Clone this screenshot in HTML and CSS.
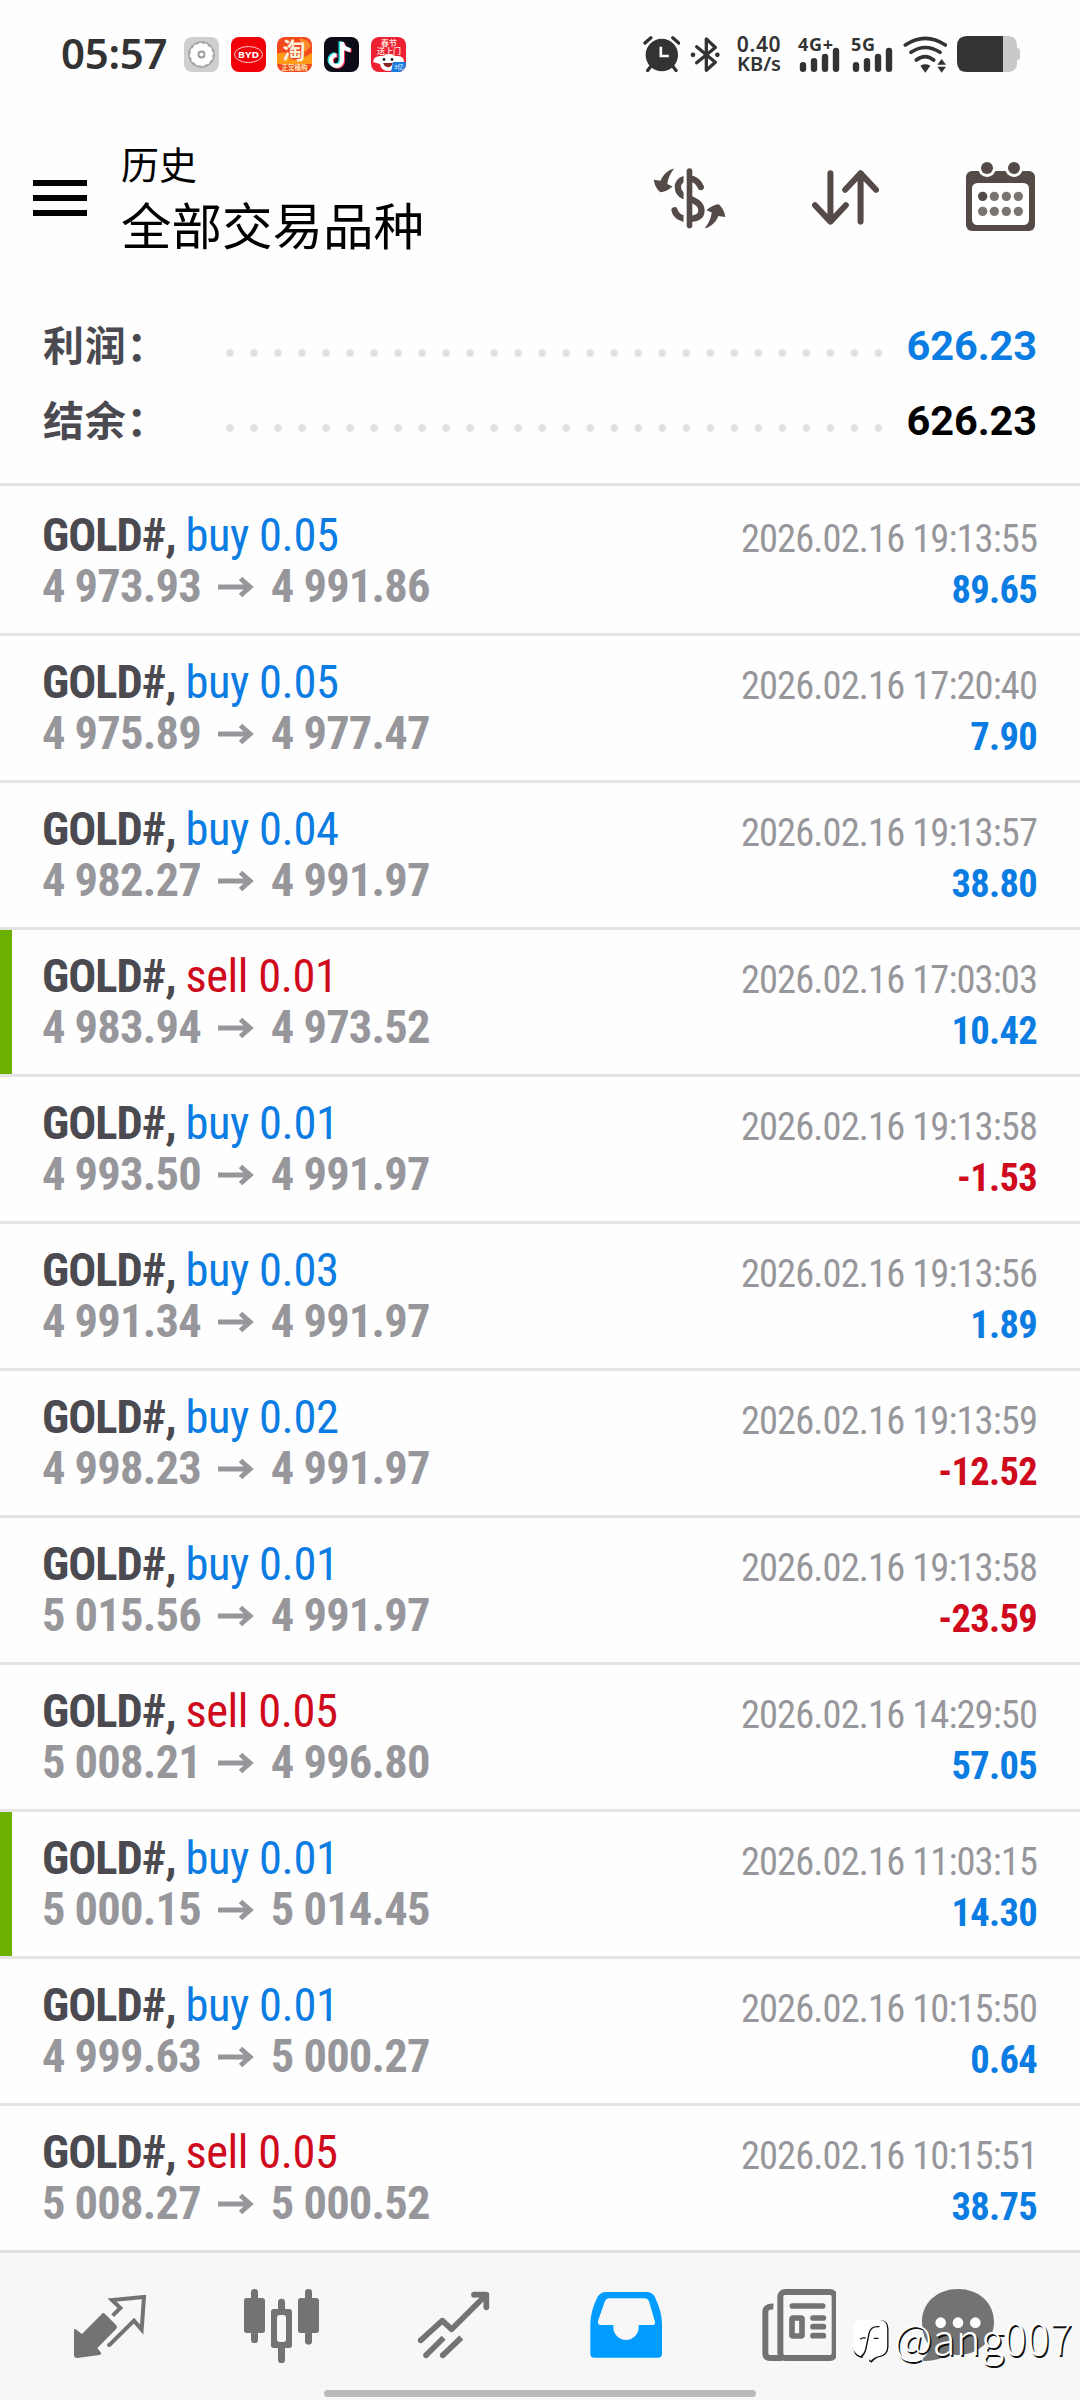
FILE: index.html
```html
<!DOCTYPE html>
<html lang="zh-CN">
<head>
<meta charset="utf-8">
<title>历史</title>
<link rel="stylesheet" href="styles.css">
</head>
<body>
<svg class="defs" width="0" height="0">
  <symbol id="arrow" viewBox="0 0 36 22"><path d="M0 11H32M22.500 2.500L32 11L22.500 19.500" fill="none" stroke="currentColor" stroke-width="5"/></symbol>
</svg>
<div class="screen">
  <div class="status">
    <span class="clock">05:57</span>
    <div class="apps">
      <svg viewBox="0 0 35 35"><rect width="35" height="35" rx="8" fill="#cfcfcf"/><circle cx="17.500" cy="17.500" r="12.500" fill="#fff" stroke="#a3a3a3" stroke-width="1.500"/><circle cx="17.500" cy="17.500" r="12" fill="none" stroke="#a3a3a3" stroke-width="2" stroke-dasharray="3 3.280"/><circle cx="17.500" cy="17.500" r="3" fill="#fff" stroke="#999" stroke-width="1.800"/></svg>
      <svg viewBox="0 0 35 35"><rect width="35" height="35" rx="8" fill="#f00008"/><ellipse cx="17.500" cy="17.500" rx="14" ry="8" fill="none" stroke="#ffc9c9" stroke-width="1"/><text x="7" y="20.800" font-size="9" font-weight="700" fill="#fff" textLength="21" lengthAdjust="spacingAndGlyphs">BYD</text></svg>
      <svg viewBox="0 0 35 35"><rect width="35" height="35" rx="8" fill="#f0491c"/><path d="M0 17Q8 13 12 20T35 16V27H0Z" fill="#ff9a18"/><path d="M22 1Q31 2 34 9L28 15Z" fill="#f98a2a"/><text x="5.500" y="21.500" font-size="23" font-weight="700" fill="#fff0dc">淘</text><text x="4.500" y="33" font-size="6.500" font-weight="700" fill="#ffe3b5">正常桶购</text></svg>
      <svg viewBox="0 0 35 35"><rect width="35" height="35" rx="8" fill="#0c0b18"/><g fill="none" stroke-width="4"><path d="M17.500 5V23.500A5.500 5.500 0 1 1 12 18M17.500 6Q19 12.500 26 13" stroke="#25e8e2" transform="translate(-1 -.8)"/><path d="M18.500 5V23.500A5.500 5.500 0 1 1 13 18M18.500 6Q20 12.500 27 13" stroke="#f43157" transform="translate(.6 .8)"/><path d="M18 5V23.500A5.500 5.500 0 1 1 12.500 18M18 6Q19.500 12.500 26.500 13" stroke="#fff"/></g></svg>
      <svg viewBox="0 0 35 35"><rect width="35" height="35" rx="8" fill="#ee2133"/><text x="10" y="9" font-size="8" font-weight="700" fill="#ffd6d0">春节</text><text x="6" y="17" font-size="8" font-weight="700" fill="#ffd6d0">送上门</text><path d="M2 25Q3 18 11 19Q18 16 25 19Q33 18 33 25L27 27Q25 34 17 34Q10 34 9 27Z" fill="#fff"/><circle cx="13" cy="22.500" r="1.400" fill="#222"/><circle cx="21" cy="22.500" r="1.400" fill="#222"/><path d="M12 26H22Q20 31 16 30Q13 29 12 26Z" fill="#8b2320"/><path d="M22 25H35V27A8 8 0 0 1 27 35H20Z" fill="#1d7be0"/><text x="23" y="32" font-size="6" fill="#fff">3亿</text></svg>
    </div>
    <div class="signals">
      <svg class="alarm" viewBox="38 48 112 108"><circle cx="95" cy="105" r="49" fill="#333"/><path d="M92 80V108H116" fill="none" stroke="#fff" stroke-width="8"/><path d="M44 69L62 53M146 69L128 53M62 139L52 152M128 139L138 152" stroke="#333" stroke-width="10" stroke-linecap="round"/></svg>
      <svg class="bt" viewBox="180 46 90 110"><path d="M200 78L256 124L229 148V54L256 80L200 126" fill="none" stroke="#333" stroke-width="10" stroke-linejoin="round" stroke-linecap="round"/><circle cx="189" cy="102" r="7" fill="#333"/><circle cx="262" cy="102" r="7" fill="#333"/></svg>
      <div class="speed"><span class="rate">0.40</span><span class="unit">KB/s</span></div>
      <div class="bars"><span>4G+</span><svg viewBox="0 0 42 36"><path d="M5 29.200V32.800M16 25.200V32.800M27 21V32.800M38 15V32.800" stroke="#333" stroke-width="6.400" stroke-linecap="round"/></svg></div>
      <div class="bars"><span>5G</span><svg viewBox="0 0 42 36"><path d="M5 29.200V32.800M16 25.200V32.800M27 21V32.800M38 15V32.800" stroke="#333" stroke-width="6.400" stroke-linecap="round"/></svg></div>
      <svg class="wifi" viewBox="820 46 132 111"><g fill="none" stroke="#333" stroke-width="11" stroke-linecap="round"><path d="M827 73Q887 33 947 73M844 95Q887 66 931 95M860 118Q887 98 912 118"/></g><path d="M872 135Q887 127 902 135L887 156ZM936 115L949 132H923ZM923 138H949L936 156Z" fill="#333"/></svg>
      <svg class="battery" viewBox="0 0 63 36"><path d="M45 0H52Q60 1 60 9V12Q63 12 63 15V21Q63 24 60 24V27Q60 35 52 36H45Z" fill="#c9c9c9"/><path d="M10 0H46V36H10Q0 36 0 26V10Q0 0 10 0Z" fill="#333"/></svg>
    </div>
  </div>

  <header class="header">
    <div class="menu"><i></i><i></i><i></i></div>
    <div class="titles"><div class="small">历史</div><div class="big">全部交易品种</div></div>
    <div class="tools">
      <svg class="currency" viewBox="40 53 220 183"><path d="M184 110C174 87 160 84 148 84C124 84 115 97 115 110C115 132 134 139 150 145C174 153 186 164 186 181C186 200 170 206 150 206C124 207 109 196 105 180" fill="none" stroke="#544a48" stroke-width="19" stroke-linecap="round"/><path d="M132 53H150V236H132Z" fill="#fff"/><path d="M150 62V226" stroke="#544a48" stroke-width="17" stroke-linecap="round"/><g fill="#544a48"><path id="swoosh" d="M104 54C86 58 70 72 63 91L42 88Q46 112 62 126Q80 124 99 108L83 101Q86 76 104 54Z"/><use href="#swoosh" transform="rotate(180 150 144)"/></g></svg>
      <svg class="sort" viewBox="518 62 200 164"><path d="M573 72V216M527 167L573 216L619 167M663 216V72M617 121L663 72L709 121" fill="none" stroke="#544a48" stroke-width="18" stroke-linecap="round" stroke-linejoin="round"/></svg>
      <svg class="calendar" viewBox="978 36 207 207"><rect x="978" y="63" width="207" height="180" rx="18" fill="#544a48"/><rect x="996" y="99" width="171" height="126" rx="16" fill="#fff"/><g fill="#fff"><circle cx="1041" cy="54" r="27"/><circle cx="1122" cy="54" r="27"/></g><g fill="#544a48"><circle cx="1041" cy="54" r="18"/><circle cx="1122" cy="54" r="18"/><circle cx="1028" cy="139" r="14"/></g><g fill="#7a7470"><circle cx="1063" cy="139" r="14"/><circle cx="1099" cy="139" r="14"/><circle cx="1135" cy="139" r="14"/><circle cx="1028" cy="184" r="14"/><circle cx="1063" cy="184" r="14"/><circle cx="1099" cy="184" r="14"/><circle cx="1135" cy="184" r="14"/></g></svg>
    </div>
  </header>

  <section class="summary">
    <div class="sum"><span class="label">利润：</span><span class="dots"></span><b class="blue">626.23</b></div>
    <div class="sum"><span class="label">结余：</span><span class="dots"></span><b>626.23</b></div>
  </section>

  <main class="deals">
    <div class="deal"><div class="name">GOLD#, <span class="blue">buy 0.05</span></div><time>2026.02.16 19:13:55</time><div class="price">4 973.93<svg><use href="#arrow"/></svg>4 991.86</div><div class="profit blue">89.65</div></div>
    <div class="deal"><div class="name">GOLD#, <span class="blue">buy 0.05</span></div><time>2026.02.16 17:20:40</time><div class="price">4 975.89<svg><use href="#arrow"/></svg>4 977.47</div><div class="profit blue">7.90</div></div>
    <div class="deal"><div class="name">GOLD#, <span class="blue">buy 0.04</span></div><time>2026.02.16 19:13:57</time><div class="price">4 982.27<svg><use href="#arrow"/></svg>4 991.97</div><div class="profit blue">38.80</div></div>
    <div class="deal marked"><div class="name">GOLD#, <span class="red">sell 0.01</span></div><time>2026.02.16 17:03:03</time><div class="price">4 983.94<svg><use href="#arrow"/></svg>4 973.52</div><div class="profit blue">10.42</div></div>
    <div class="deal"><div class="name">GOLD#, <span class="blue">buy 0.01</span></div><time>2026.02.16 19:13:58</time><div class="price">4 993.50<svg><use href="#arrow"/></svg>4 991.97</div><div class="profit red">-1.53</div></div>
    <div class="deal"><div class="name">GOLD#, <span class="blue">buy 0.03</span></div><time>2026.02.16 19:13:56</time><div class="price">4 991.34<svg><use href="#arrow"/></svg>4 991.97</div><div class="profit blue">1.89</div></div>
    <div class="deal"><div class="name">GOLD#, <span class="blue">buy 0.02</span></div><time>2026.02.16 19:13:59</time><div class="price">4 998.23<svg><use href="#arrow"/></svg>4 991.97</div><div class="profit red">-12.52</div></div>
    <div class="deal"><div class="name">GOLD#, <span class="blue">buy 0.01</span></div><time>2026.02.16 19:13:58</time><div class="price">5 015.56<svg><use href="#arrow"/></svg>4 991.97</div><div class="profit red">-23.59</div></div>
    <div class="deal"><div class="name">GOLD#, <span class="red">sell 0.05</span></div><time>2026.02.16 14:29:50</time><div class="price">5 008.21<svg><use href="#arrow"/></svg>4 996.80</div><div class="profit blue">57.05</div></div>
    <div class="deal marked"><div class="name">GOLD#, <span class="blue">buy 0.01</span></div><time>2026.02.16 11:03:15</time><div class="price">5 000.15<svg><use href="#arrow"/></svg>5 014.45</div><div class="profit blue">14.30</div></div>
    <div class="deal"><div class="name">GOLD#, <span class="blue">buy 0.01</span></div><time>2026.02.16 10:15:50</time><div class="price">4 999.63<svg><use href="#arrow"/></svg>5 000.27</div><div class="profit blue">0.64</div></div>
    <div class="deal"><div class="name">GOLD#, <span class="red">sell 0.05</span></div><time>2026.02.16 10:15:51</time><div class="price">5 008.27<svg><use href="#arrow"/></svg>5 000.52</div><div class="profit blue">38.75</div></div>
  </main>

  <nav class="nav">
    <div class="tabs">
      <svg viewBox="36 54 228 228"><path d="M129 128Q134 130 139 136L169 166Q173 171 169 176L112 234L124 250Q124 254 118 255L52 264Q42 264 42 255V180Q44 174 50 180L66 192Z" fill="#737373"/><path d="M158 137L181 114L156 90L252 81L245 179L222 152L147 226" fill="none" stroke="#737373" stroke-width="12"/><circle cx="147" cy="225" r="6" fill="#737373"/></svg>
      <svg viewBox="552 54 228 228"><g fill="#737373"><rect x="552" y="84" width="63" height="105" rx="8"/><rect x="573" y="57" width="21" height="162" rx="10"/><rect x="714" y="84" width="63" height="105" rx="8"/><rect x="735" y="57" width="21" height="167" rx="10"/><rect x="633" y="117" width="63" height="117" rx="8"/><rect x="654" y="86" width="21" height="193" rx="10"/></g><rect x="651" y="135" width="27" height="81" rx="8" fill="#f7f7f7"/></svg>
      <svg viewBox="1068 54 228 228"><g fill="none" stroke="#737373" stroke-width="17" stroke-linejoin="round"><path d="M1082 211L1147 152L1175 178L1275 78M1242 74H1279V112M1098 256L1151 203M1148 256L1204 203" /><path d="M1082 211h.1M1098 256h.1M1148 256h.1M1242 74h.1M1279 112h.1" stroke-linecap="round"/></g></svg>
      <svg viewBox="0 0 228 228"><path fill="#009cff" fill-rule="evenodd" d="M52 12H178Q195 12 203 32Q222 72 222 110V197Q222 209 210 209H19Q7 209 7 197V110Q7 72 26 32Q35 12 52 12ZM62 31Q55 31 51 39L30 99Q28 111 39 111H76V118A38 38 0 0 0 152 118V111H191Q203 111 201 101L183 40Q179 31 171 31Z"/></svg>
      <svg viewBox="60 54 228 228"><path d="M100 110Q76 108 76 126V250Q76 264 90 264H126" fill="none" stroke="#737373" stroke-width="18"/><rect x="121" y="66" width="163" height="198" rx="14" fill="none" stroke="#737373" stroke-width="18"/><path d="M157 108H248M219 144H250M219 170H250M219 197H250" stroke="#737373" stroke-width="17" stroke-linecap="round"/><rect x="156" y="144" width="30" height="54" rx="3" fill="none" stroke="#737373" stroke-width="17"/></svg>
      <svg class="chat" viewBox="540 54 228 228"><path d="M654 57C716 57 762 98 762 156C762 212 714 255 654 255Q640 255 632 253Q590 275 550 273Q545 269 550 264Q566 250 571 230Q546 202 546 156C546 98 592 57 654 57Z" fill="#737373"/><g fill="#fff"><circle cx="602" cy="158" r="16"/><circle cx="654" cy="158" r="16"/><circle cx="706" cy="158" r="16"/></g></svg>
    </div>
    <div class="pill"></div>
  </nav>

  <div class="watermark">
    <svg viewBox="338 150 116 135"><path d="M362 153H424Q447 155 447 180V234Q446 258 422 264Q408 266 396 281L388 276L398 262L430 170Z" fill="#111"/><path d="M344 236Q344 262 370 265" fill="none" stroke="#111" stroke-width="4"/><path d="M362 153H422Q443 155 443 180V232Q443 256 420 261Q406 263 393 276L390 262Q344 264 340 234V178Q340 155 362 153Z" fill="#fff"/><path d="M420 173Q394 170 389 192L379 240Q375 258 362 264M362 211Q366 205 378 207M403 208H417" fill="none" stroke="#111" stroke-width="4"/></svg>
    <span>@ang007</span>
  </div>
</div>
</body>
</html>
```
FILE: styles.css
```css
* { box-sizing: border-box; }
body { margin: 0; background: #fefefe; }
svg { display: block; flex: none; }
.defs { position: absolute; }

.screen {
  position: relative;
  width: 1080px;
  height: 2400px;
  overflow: hidden;
  display: flex;
  flex-direction: column;
  background: #fefefe;
  font-family: Roboto, "Noto Sans CJK SC", sans-serif;
}
.blue { color: #0a7ce2; }
.red { color: #cf0a1c; }

/* status bar */
.status {
  height: 108px;
  padding: 0 60px 0 61px;
  display: flex;
  align-items: center;
  font-family: "Noto Sans", "Noto Sans CJK SC", sans-serif;
  color: #333;
}
.clock { width: 123px; margin-top: -2px; font-size: 42px; font-weight: 600; line-height: 58px; letter-spacing: -0.300px; }
.apps { display: flex; gap: 11.700px; }
.apps svg { width: 35px; height: 35px; overflow: visible; }
.signals { margin-left: auto; display: flex; align-items: center; }
.alarm { width: 37px; height: 36px; }
.bt { width: 30px; height: 37px; margin-left: 10px; }
.speed { width: 48px; height: 38px; margin-left: 15px; display: flex; flex-direction: column; align-items: center; white-space: nowrap; }
.rate { font-size: 21px; line-height: 19px; font-weight: 600; letter-spacing: 0.700px; }
.unit { font-size: 20px; line-height: 20px; font-weight: 600; }
.bars { width: 42px; height: 36px; margin-left: 15px; display: grid; }
.bars > * { grid-area: 1 / 1; }
.bars span { font-size: 18px; line-height: 16px; font-weight: 700; letter-spacing: 0.700px; }
.bars svg { width: 42px; height: 36px; }
.bars + .bars { margin-left: 11px; }
.wifi { width: 44px; height: 37px; margin-left: 10px; }
.battery { width: 63px; height: 36px; margin-left: 10px; }

/* title bar */
.header { height: 192px; padding: 0 45px 0 33px; display: flex; }
.menu { width: 54px; margin: 72px 34px 0 0; display: flex; flex-direction: column; gap: 9px; }
.menu i { height: 6px; background: #000; }
.titles { padding-top: 28px; font-family: "Noto Sans CJK SC", sans-serif; color: #000; }
.small { font-size: 38px; line-height: 54px; font-weight: 400; }
.big { font-size: 50.500px; line-height: 66px; font-weight: 400; }
.tools { margin-left: auto; display: flex; }
.currency { width: 73px; height: 61px; margin-top: 60px; }
.sort { width: 67px; height: 55px; margin: 62px 0 0 86px; }
.calendar { width: 69px; height: 69px; margin: 54px 0 0 87px; }

/* totals */
.summary { height: 183px; padding: 8px 43px 0 43px; }
.sum { height: 75px; display: flex; align-items: center; }
.label { width: 175px; margin-top: -6px; font: 700 41px/60px "Noto Sans CJK SC", sans-serif; letter-spacing: 0.800px; color: #4a4a50; }
.dots {
  width: 673px;
  height: 8px;
  margin-top: 15px;
  background: radial-gradient(circle at 12px 4px, #e0e0e1 3.400px, transparent 4.200px) 0 0 / 24.020px 8px;
}
.sum b { margin-left: auto; font-size: 41.500px; line-height: 60px; font-weight: 700; letter-spacing: -0.100px; }

/* deals */
.deal {
  height: 147px;
  padding: 21px 43px 0 42px;
  border-top: 3px solid #e2e3e2;
  display: grid;
  grid-template: 51px 51px / 1fr auto;
  line-height: 51px;
  white-space: pre;
  font-family: "Roboto Condensed", Roboto, sans-serif;
}
.deal:first-child { height: 150px; padding-top: 24px; }
.marked { background: linear-gradient(#6db100, #6db100) 0 0 / 12px 100% no-repeat; }
.name { font-size: 46.500px; font-weight: 700; color: #4a4a50; letter-spacing: -1px; }
.name span { font-weight: 400; letter-spacing: -0.450px; }
.price { display: flex; align-items: center; font-size: 46.500px; font-weight: 700; color: #97979b; letter-spacing: -0.800px; }
.price svg { width: 36px; height: 22px; margin: 0 17px; }
.deal time { font-size: 38.500px; line-height: 58px; color: #97979b; text-align: right; letter-spacing: -0.900px; }
.profit { font-size: 38.500px; line-height: 58px; font-weight: 700; text-align: right; letter-spacing: -0.700px; }

/* bottom tabs */
.nav { height: 150px; border-top: 3px solid #e0e0e0; background: #f7f7f7; padding-top: 35px; }
.tabs { display: flex; gap: 96px; padding-left: 72px; }
.tabs svg { width: 76px; height: 76px; }
.tabs .chat { margin-left: -12px; }
.pill { width: 432px; height: 7px; border-radius: 4px; margin: 26px auto 0; background: #bababa; }

.watermark {
  position: absolute;
  left: 852px;
  top: 2308px;
  display: flex;
  align-items: center;
  gap: 3px;
  color: #fff;
  font: 300 42px/58px "Noto Sans CJK SC", sans-serif;
  letter-spacing: 0.300px;
  text-shadow: 1.500px 1.500px 0.500px #111;
}
.watermark svg { width: 39px; height: 45px; margin-top: 8px; }
```
